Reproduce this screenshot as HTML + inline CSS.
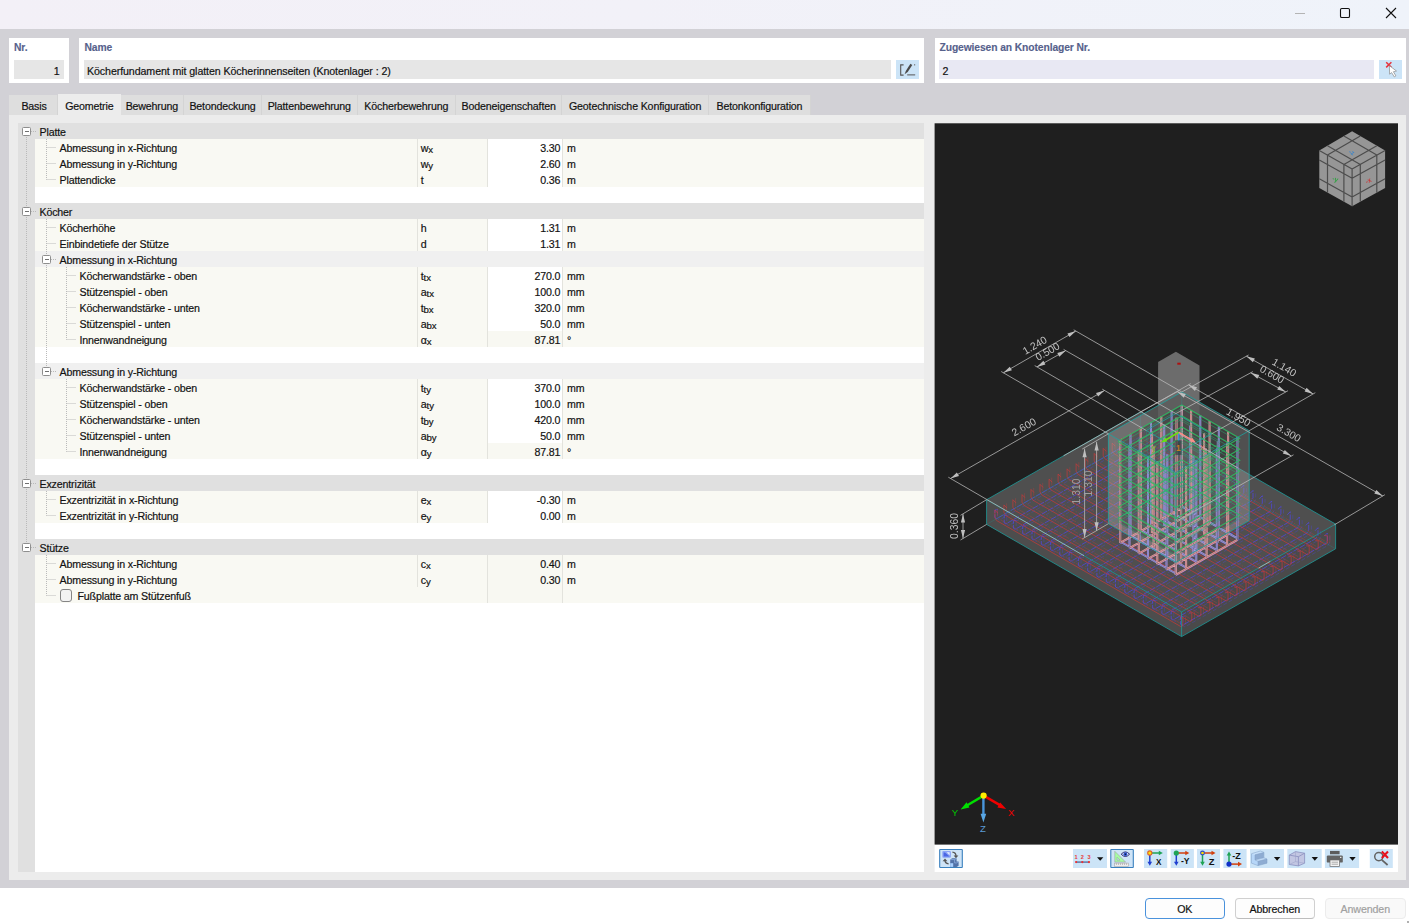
<!DOCTYPE html>
<html lang="de"><head><meta charset="utf-8"><title>Köcherfundament</title>
<style>
*{box-sizing:border-box;margin:0;padding:0}
html,body{width:1409px;height:923px;overflow:hidden;background:#fff}
body{position:relative;font-family:"Liberation Sans",sans-serif;font-size:10.65px;color:#111;-webkit-text-stroke-width:0.18px}
.abs{position:absolute}
#title{left:0;top:0;width:1409px;height:29px;background:linear-gradient(90deg,#f3f0f7 0%,#f2f1f8 45%,#eff3fa 100%)}
#gray{left:0;top:29px;width:1409px;height:859px;background:#d2d1d6}
.box{background:#fff}
.blab{position:absolute;top:3.7px;font-weight:bold;font-size:10.3px;color:#56618c;-webkit-text-stroke-width:0.12px;white-space:nowrap;letter-spacing:-0.1px}
.inp{position:absolute;top:22px;height:19px;background:#e6e6e6;font-size:10.65px;line-height:23.3px;white-space:nowrap;overflow:hidden;color:#111;letter-spacing:-0.09px}
.ibtn{position:absolute;background:#cce4f7}
#tabs{left:9px;top:94.5px;height:20.5px;white-space:nowrap;font-size:0}
.tab{display:inline-block;height:20.5px;line-height:22.5px;font-size:10.65px;background:#dedede;border-right:1px solid #d4d4d4;text-align:center;vertical-align:top;color:#111;letter-spacing:-0.16px}
.tab.act{background:#ececec;border-right:none;position:relative;top:-1px;height:21.5px;line-height:24.5px}
#panel{left:9px;top:115px;width:1397.4px;height:765px;background:#ececec}
#tree{left:18px;top:123px;width:906px;height:749px;background:#fff;overflow:hidden}
#gutter{left:0;top:0;width:16.5px;height:749px;background:#e0e0e0}
.row{position:absolute;left:0;width:906px;height:16px;line-height:18.5px;white-space:nowrap;letter-spacing:-0.16px}
.row.hd{background:#e0e0e0}
.row.sh{left:16.5px;width:889.5px;background:#f0f0f0}
.row.sh .bx{margin-left:-16.5px}
.row.sh .lb{margin-left:-16.5px}
.row.dt{left:16.5px;width:889.5px;background:#f9f9f3}
.row.dt .lb{margin-left:-16.5px}
.row.bl{left:16.5px;width:889.5px;background:#fff}
.lb{position:absolute;top:0}
.bx{position:absolute;top:4px;width:9px;height:9px;border:1px solid #8e8e8e;border-radius:1.5px;background:#fff}
.bx:after{content:"";position:absolute;left:1.5px;top:3px;width:4px;height:1px;background:#707070}
.sy{position:absolute;left:382px;top:0;width:71px;height:16px;border-left:1px solid #e3e3dd;padding-left:3.3px}
.sy sub{font-size:9.6px;vertical-align:baseline;position:relative;top:1.1px;letter-spacing:-0.1px}
.v{position:absolute;left:452.5px;top:0;width:76px;height:16px;text-align:right;padding-right:1.8px;border-left:1px solid #e3e3dd;border-right:1px solid #e3e3dd;background:#f8f8f2}
.v.ed{background:#fff}
.un{position:absolute;left:532.5px;top:0}
.cb{position:absolute;left:25px;top:2.3px;width:12.5px;height:12.5px;border:1px solid #858585;border-radius:3px;background:#f3f3f3}
.tl{position:absolute;left:0;top:0}
.tb{position:absolute;top:4.4px;height:19px;background:#cce4f7}
.tb.sel{border:1px solid #3c84c4;background:#cfe4f6}
#bottom{left:0;top:888px;width:1409px;height:35px;background:#fff}
.btn{position:absolute;top:898px;height:21px;width:80.5px;border:1px solid #d0d0d0;border-bottom-color:#bdbdbd;border-radius:4px;background:#fdfdfd;font-size:10.65px;letter-spacing:-0.1px;text-align:center;line-height:21.5px;color:#111}
.btn.def{border:1.5px solid #4a92dc;line-height:20.5px}
.btn.dis{color:#a0a0a0;background:#f9f9f9;border-color:#ececec}
</style></head><body>
<div id="title" class="abs"></div>
<svg class="abs" style="left:1290px;top:4px" width="112" height="20" viewBox="1290 4 112 20"><path d="M1295 13.5H1305" stroke="#b4b4b4" stroke-width="1"/><rect x="1340.5" y="8.5" width="9" height="9" rx="1.3" fill="none" stroke="#111" stroke-width="1.1"/><path d="M1386 8L1396 18M1396 8L1386 18" stroke="#111" stroke-width="1.1"/></svg>
<div id="gray" class="abs"></div>
<div class="abs box" style="left:9px;top:38px;width:60px;height:45px"><span class="blab" style="left:5px">Nr.</span><div class="inp" style="left:5px;width:50px;text-align:right;padding-right:4.5px">1</div></div>
<div class="abs box" style="left:79px;top:38px;width:845px;height:45px"><span class="blab" style="left:5.5px">Name</span><div class="inp" style="left:5px;width:807px;padding-left:3px">Köcherfundament mit glatten Köcherinnenseiten (Knotenlager : 2)</div><div class="ibtn" style="left:817.2px;top:22.3px;width:23px;height:19px"><svg width="23" height="19" viewBox="896.2 60.3 23 19" style="display:block"><path d="M903.8 65.2H900.9V75.4H903.8" fill="none" stroke="#555" stroke-width="1.1"/><path d="M904.8 74.6l1.2-3.4l4.6-7.2l1.9 1.2l-4.6 7.2z" fill="#4a4a4a"/><path d="M907.4 75.2H915.4" stroke="#555" stroke-width="1"/><rect x="914.2" y="64.6" width="1.2" height="1.1" fill="#666"/></svg></div></div>
<div class="abs box" style="left:935px;top:38px;width:471.4px;height:45px"><span class="blab" style="left:4.5px">Zugewiesen an Knotenlager Nr.</span><div class="inp" style="left:4px;width:435px;padding-left:3.4px;background:#e8e8f3">2</div><div class="ibtn" style="left:443.8px;top:22px;width:23.2px;height:19px"><svg width="23.2" height="19" viewBox="1378.8 60 23.2 19" style="display:block"><path d="M1386 62.2l5.2 5.2M1391.2 62.2l-5.2 5.2" stroke="#e8323c" stroke-width="1.5"/><path d="M1389.2 65.7L1389.4 74.2L1391.4 72.6L1394.1 76.9L1395.7 75.9L1393.2 71.7L1396.3 71Z" fill="#fff" stroke="#8a8a8a" stroke-width="0.7" stroke-linejoin="round"/></svg></div></div>
<div id="tabs" class="abs"><span class="tab" style="width:49px;padding-left:2px">Basis</span><span class="tab act" style="width:62.7px">Geometrie</span><span class="tab" style="width:63.3px">Bewehrung</span><span class="tab" style="width:78px">Betondeckung</span><span class="tab" style="width:95.6px">Plattenbewehrung</span><span class="tab" style="width:98.4px">Köcherbewehrung</span><span class="tab" style="width:106.4px">Bodeneigenschaften</span><span class="tab" style="width:146.6px">Geotechnische Konfiguration</span><span class="tab" style="width:102px">Betonkonfiguration</span></div>
<div id="panel" class="abs"></div>
<div id="tree" class="abs"><div id="gutter" class="abs"></div>
<div class="row hd" style="top:0px"><i class="bx" style="left:4px"></i><span class="lb" style="left:21.5px">Platte</span></div>
<div class="row dt" style="top:16px"><span class="lb" style="left:41.5px">Abmessung in x-Richtung</span><span class="sy">w<sub>x</sub></span><span class="v ed">3.30</span><span class="un">m</span></div>
<div class="row dt" style="top:32px"><span class="lb" style="left:41.5px">Abmessung in y-Richtung</span><span class="sy">w<sub>y</sub></span><span class="v ed">2.60</span><span class="un">m</span></div>
<div class="row dt" style="top:48px"><span class="lb" style="left:41.5px">Plattendicke</span><span class="sy">t</span><span class="v ed">0.36</span><span class="un">m</span></div>
<div class="row bl" style="top:64px"></div>
<div class="row hd" style="top:80px"><i class="bx" style="left:4px"></i><span class="lb" style="left:21.5px">Köcher</span></div>
<div class="row dt" style="top:96px"><span class="lb" style="left:41.5px">Köcherhöhe</span><span class="sy">h</span><span class="v ed">1.31</span><span class="un">m</span></div>
<div class="row dt" style="top:112px"><span class="lb" style="left:41.5px">Einbindetiefe der Stütze</span><span class="sy">d</span><span class="v ed">1.31</span><span class="un">m</span></div>
<div class="row sh" style="top:128px"><i class="bx" style="left:24px"></i><span class="lb" style="left:41.5px">Abmessung in x-Richtung</span></div>
<div class="row dt" style="top:144px"><span class="lb" style="left:61.5px">Köcherwandstärke - oben</span><span class="sy">t<sub>tx</sub></span><span class="v ed">270.0</span><span class="un">mm</span></div>
<div class="row dt" style="top:160px"><span class="lb" style="left:61.5px">Stützenspiel - oben</span><span class="sy">a<sub>tx</sub></span><span class="v ed">100.0</span><span class="un">mm</span></div>
<div class="row dt" style="top:176px"><span class="lb" style="left:61.5px">Köcherwandstärke - unten</span><span class="sy">t<sub>bx</sub></span><span class="v ed">320.0</span><span class="un">mm</span></div>
<div class="row dt" style="top:192px"><span class="lb" style="left:61.5px">Stützenspiel - unten</span><span class="sy">a<sub>bx</sub></span><span class="v ed">50.0</span><span class="un">mm</span></div>
<div class="row dt" style="top:208px"><span class="lb" style="left:61.5px">Innenwandneigung</span><span class="sy">α<sub>x</sub></span><span class="v">87.81</span><span class="un">°</span></div>
<div class="row bl" style="top:224px"></div>
<div class="row sh" style="top:240px"><i class="bx" style="left:24px"></i><span class="lb" style="left:41.5px">Abmessung in y-Richtung</span></div>
<div class="row dt" style="top:256px"><span class="lb" style="left:61.5px">Köcherwandstärke - oben</span><span class="sy">t<sub>ty</sub></span><span class="v ed">370.0</span><span class="un">mm</span></div>
<div class="row dt" style="top:272px"><span class="lb" style="left:61.5px">Stützenspiel - oben</span><span class="sy">a<sub>ty</sub></span><span class="v ed">100.0</span><span class="un">mm</span></div>
<div class="row dt" style="top:288px"><span class="lb" style="left:61.5px">Köcherwandstärke - unten</span><span class="sy">t<sub>by</sub></span><span class="v ed">420.0</span><span class="un">mm</span></div>
<div class="row dt" style="top:304px"><span class="lb" style="left:61.5px">Stützenspiel - unten</span><span class="sy">a<sub>by</sub></span><span class="v ed">50.0</span><span class="un">mm</span></div>
<div class="row dt" style="top:320px"><span class="lb" style="left:61.5px">Innenwandneigung</span><span class="sy">α<sub>y</sub></span><span class="v">87.81</span><span class="un">°</span></div>
<div class="row bl" style="top:336px"></div>
<div class="row hd" style="top:352px"><i class="bx" style="left:4px"></i><span class="lb" style="left:21.5px">Exzentrizität</span></div>
<div class="row dt" style="top:368px"><span class="lb" style="left:41.5px">Exzentrizität in x-Richtung</span><span class="sy">e<sub>x</sub></span><span class="v ed">-0.30</span><span class="un">m</span></div>
<div class="row dt" style="top:384px"><span class="lb" style="left:41.5px">Exzentrizität in y-Richtung</span><span class="sy">e<sub>y</sub></span><span class="v ed">0.00</span><span class="un">m</span></div>
<div class="row bl" style="top:400px"></div>
<div class="row hd" style="top:416px"><i class="bx" style="left:4px"></i><span class="lb" style="left:21.5px">Stütze</span></div>
<div class="row dt" style="top:432px"><span class="lb" style="left:41.5px">Abmessung in x-Richtung</span><span class="sy">c<sub>x</sub></span><span class="v">0.40</span><span class="un">m</span></div>
<div class="row dt" style="top:448px"><span class="lb" style="left:41.5px">Abmessung in y-Richtung</span><span class="sy">c<sub>y</sub></span><span class="v">0.30</span><span class="un">m</span></div>
<div class="row dt ck" style="top:464px"><i class="cb"></i><span class="lb" style="left:59.5px">Fußplatte am Stützenfuß</span><span class="v"></span></div>
<svg class="tl" width="80" height="500" viewBox="0 0 80 500"><path d="M8.5 14V84M8.5 94V356M8.5 366V420M13 8.5H19M13 88.5H19M13 360.5H19M13 424.5H19M28.5 16V56.5M28.5 24.5H38M28.5 40.5H38M28.5 56.5H38M28.5 96V132M28.5 142V244M28.5 104.5H38M28.5 120.5H38M33 136.5H39M48.5 144V216.5M48.5 152.5H58M48.5 168.5H58M48.5 184.5H58M48.5 200.5H58M48.5 216.5H58M33 248.5H39M48.5 256V328.5M48.5 264.5H58M48.5 280.5H58M48.5 296.5H58M48.5 312.5H58M48.5 328.5H58M28.5 368V392.5M28.5 376.5H38M28.5 392.5H38M28.5 432V472.5M28.5 440.5H38M28.5 456.5H38M28.5 472.5H38" fill="none" stroke="#bababa" stroke-width="1" stroke-dasharray="1 1"/></svg>
</div>
<svg id="view" class="abs" width="464" height="749" viewBox="934 123 464 749" style="left:934px;top:123px">
<rect x="934.6" y="844" width="463.4" height="28" fill="#fff"/>
<rect x="934.6" y="123.3" width="463.4" height="721.3" fill="#1f1f1f"/>
<polygon points="1158.1,361.9 1175.9,351.8 1199.5,365.4 1199.5,523.9 1181.7,534 1158.1,520.4" fill="#5c5c5c"/>
<polygon points="1108.4,433.8 1181.8,392 1249.2,430.7 1249.2,520.6 1175.8,562.4 1108.4,523.7" fill="#1f1f1f"/>
<polygon points="1158.1,361.9 1175.9,351.8 1199.5,365.4 1199.5,523.9 1181.7,534 1158.1,520.4" fill="#ffffff" fill-opacity="0.1"/>
<polygon points="986.6,499.7 1181.6,611.9 1335.6,524.1 1140.5,411.9" fill="#aaaaaa" fill-opacity="0.35"/>
<polygon points="986.6,499.7 1181.6,611.9 1181.6,636.6 986.6,524.4" fill="#a4a4a4" fill-opacity="0.35"/>
<polygon points="1181.6,611.9 1335.6,524.1 1335.6,548.8 1181.6,636.6" fill="#9c9c9c" fill-opacity="0.35"/>
<path d="M997.5 511.5L997.5 519.1L999.3 520.1L1142.6 438.4L1144.4 435.4L1144.4 427.8M1006.8 516.9L1006.8 524.4L1008.6 525.5L1151.9 443.8L1153.6 440.7L1153.6 433.2M1016.1 522.2L1016.1 529.8L1017.9 530.8L1161.1 449.1L1162.9 446.1L1162.9 438.5M1025.4 527.5L1025.4 535.1L1027.2 536.1L1170.4 454.5L1172.2 451.4L1172.2 443.8M1034.7 532.9L1034.7 540.4L1036.4 541.5L1179.7 459.8L1181.5 456.7L1181.5 449.2M1043.9 538.2L1043.9 545.8L1045.7 546.8L1189 465.1L1190.7 462.1L1190.7 454.5M1053.2 543.6L1053.2 551.1L1055 552.1L1198.3 470.5L1200 467.4L1200 459.9M1062.5 548.9L1062.5 556.4L1064.3 557.5L1207.5 475.8L1209.3 472.7L1209.3 465.2M1071.8 554.2L1071.8 561.8L1073.5 562.8L1216.8 481.1L1218.6 478.1L1218.6 470.5M1081 559.6L1081 567.1L1082.8 568.2L1226.1 486.5L1227.9 483.4L1227.9 475.9M1090.3 564.9L1090.3 572.5L1092.1 573.5L1235.4 491.8L1237.1 488.8L1237.1 481.2M1099.6 570.2L1099.6 577.8L1101.4 578.8L1244.6 497.2L1246.4 494.1L1246.4 486.5M1108.9 575.6L1108.9 583.1L1110.7 584.2L1253.9 502.5L1255.7 499.4L1255.7 491.9M1118.2 580.9L1118.2 588.5L1119.9 589.5L1263.2 507.8L1265 504.8L1265 497.2M1127.4 586.3L1127.4 593.8L1129.2 594.9L1272.5 513.2L1274.3 510.1L1274.3 502.6M1136.7 591.6L1136.7 599.1L1138.5 600.2L1281.8 518.5L1283.5 515.4L1283.5 507.9M1146 596.9L1146 604.5L1147.8 605.5L1291 523.9L1292.8 520.8L1292.8 513.2M1155.3 602.3L1155.3 609.8L1157.1 610.9L1300.3 529.2L1302.1 526.1L1302.1 518.6M1164.6 607.6L1164.6 615.2L1166.3 616.2L1309.6 534.5L1311.4 531.5L1311.4 523.9M1173.8 613L1173.8 620.5L1175.6 621.5L1318.9 539.9L1320.7 536.8L1320.7 529.3M1183.1 618.3L1183.1 625.8L1184.9 626.9L1328.2 545.2L1329.9 542.1L1329.9 534.6" fill="none" stroke="#4c44e0" stroke-width="0.65" stroke-opacity="0.55" stroke-dasharray="4 2"/>
<path d="M997.5 508.5L997.5 516L999.3 519.1L1183.7 625.2L1185.5 624.2L1185.5 616.6M1006.6 503.4L1006.6 510.9L1008.3 514L1192.7 620.1L1194.5 619L1194.5 611.5M1015.6 498.2L1015.6 505.7L1017.4 508.8L1201.8 614.9L1203.5 613.9L1203.5 606.3M1024.6 493.1L1024.6 500.6L1026.4 503.7L1210.8 609.8L1212.6 608.7L1212.6 601.2M1033.7 487.9L1033.7 495.5L1035.4 498.5L1219.8 604.6L1221.6 603.6L1221.6 596M1042.7 482.8L1042.7 490.3L1044.5 493.4L1228.9 599.5L1230.6 598.4L1230.6 590.9M1051.7 477.6L1051.7 485.2L1053.5 488.2L1237.9 594.3L1239.7 593.3L1239.7 585.7M1060.7 472.5L1060.7 480L1062.5 483.1L1246.9 589.2L1248.7 588.1L1248.7 580.6M1069.8 467.3L1069.8 474.9L1071.5 477.9L1255.9 584L1257.7 583L1257.7 575.4M1078.8 462.2L1078.8 469.7L1080.6 472.8L1265 578.9L1266.7 577.8L1266.7 570.3M1087.8 457L1087.8 464.6L1089.6 467.7L1274 573.7L1275.8 572.7L1275.8 565.1M1096.9 451.9L1096.9 459.4L1098.6 462.5L1283 568.6L1284.8 567.5L1284.8 560M1105.9 446.7L1105.9 454.3L1107.7 457.4L1292 563.4L1293.8 562.4L1293.8 554.9M1114.9 441.6L1114.9 449.1L1116.7 452.2L1301.1 558.3L1302.8 557.3L1302.8 549.7M1123.9 436.4L1123.9 444L1125.7 447.1L1310.1 553.1L1311.9 552.1L1311.9 544.6M1133 431.3L1133 438.8L1134.7 441.9L1319.1 548L1320.9 547L1320.9 539.4M1142 426.1L1142 433.7L1143.8 436.8L1328.2 542.9L1329.9 541.8L1329.9 534.3" fill="none" stroke="#d83838" stroke-width="0.6" stroke-opacity="0.5" stroke-dasharray="8 1.5 1.5 1.5"/>
<path d="M997.8 509.7L994.9 510L994.9 517.5L996.7 518.6L1139.9 436.9L1141.7 433.8L1141.7 426.3L1138.7 429.4M1007.1 515L1004.2 515.3L1004.2 522.9L1005.9 523.9L1149.2 442.3L1151 439.2L1151 431.6L1148 434.7M1016.4 520.4L1013.4 520.7L1013.4 528.2L1015.2 529.3L1158.5 447.6L1160.3 444.5L1160.3 437L1157.3 440M1025.7 525.7L1022.7 526L1022.7 533.6L1024.5 534.6L1167.8 452.9L1169.5 449.9L1169.5 442.3L1166.6 445.4M1035 531L1032 531.4L1032 538.9L1033.8 539.9L1177 458.3L1178.8 455.2L1178.8 447.7L1175.9 450.7M1044.2 536.4L1041.3 536.7L1041.3 544.2L1043 545.3L1186.3 463.6L1188.1 460.5L1188.1 453L1185.1 456M1053.5 541.7L1050.6 542L1050.6 549.6L1052.3 550.6L1195.6 468.9L1197.4 465.9L1197.4 458.3L1194.4 461.4M1062.8 547L1059.8 547.4L1059.8 554.9L1061.6 556L1204.9 474.3L1206.6 471.2L1206.6 463.7L1203.7 466.7M1072.1 552.4L1069.1 552.7L1069.1 560.2L1070.9 561.3L1214.1 479.6L1215.9 476.5L1215.9 469L1213 472.1M1081.3 557.7L1078.4 558L1078.4 565.6L1080.2 566.6L1223.4 485L1225.2 481.9L1225.2 474.3L1222.2 477.4M1090.6 563.1L1087.7 563.4L1087.7 570.9L1089.4 572L1232.7 490.3L1234.5 487.2L1234.5 479.7L1231.5 482.7M1099.9 568.4L1096.9 568.7L1096.9 576.3L1098.7 577.3L1242 495.6L1243.8 492.6L1243.8 485L1240.8 488.1M1109.2 573.7L1106.2 574.1L1106.2 581.6L1108 582.6L1251.3 501L1253 497.9L1253 490.4L1250.1 493.4M1118.5 579.1L1115.5 579.4L1115.5 586.9L1117.3 588L1260.5 506.3L1262.3 503.2L1262.3 495.7L1259.4 498.8M1127.7 584.4L1124.8 584.7L1124.8 592.3L1126.6 593.3L1269.8 511.6L1271.6 508.6L1271.6 501L1268.6 504.1M1137 589.8L1134.1 590.1L1134.1 597.6L1135.8 598.7L1279.1 517L1280.9 513.9L1280.9 506.4L1277.9 509.4M1146.3 595.1L1143.3 595.4L1143.3 603L1145.1 604L1288.4 522.3L1290.2 519.3L1290.2 511.7L1287.2 514.8M1155.6 600.4L1152.6 600.7L1152.6 608.3L1154.4 609.3L1297.7 527.7L1299.4 524.6L1299.4 517L1296.5 520.1M1164.9 605.8L1161.9 606.1L1161.9 613.6L1163.7 614.7L1306.9 533L1308.7 529.9L1308.7 522.4L1305.8 525.4M1174.1 611.1L1171.2 611.4L1171.2 619L1173 620L1316.2 538.3L1318 535.3L1318 527.7L1315 530.8M1183.4 616.4L1180.5 616.8L1180.5 624.3L1182.2 625.4L1325.5 543.7L1327.3 540.6L1327.3 533.1L1324.3 536.1" fill="none" stroke="#5046ee" stroke-width="0.85" stroke-opacity="0.8" stroke-dasharray="6 1.2"/>
<path d="M997.8 513.1L994.9 510L994.9 517.6L996.7 520.6L1181 626.7L1182.8 625.7L1182.8 618.1L1179.9 617.8M1006.9 507.9L1003.9 504.9L1003.9 512.4L1005.7 515.5L1190.1 621.6L1191.8 620.5L1191.8 613L1188.9 612.7M1015.9 502.8L1012.9 499.7L1012.9 507.3L1014.7 510.3L1199.1 616.4L1200.9 615.4L1200.9 607.8L1197.9 607.5M1024.9 497.6L1022 494.6L1022 502.1L1023.7 505.2L1208.1 611.3L1209.9 610.2L1209.9 602.7L1206.9 602.4M1033.9 492.5L1031 489.4L1031 497L1032.8 500.1L1217.2 606.1L1218.9 605.1L1218.9 597.5L1216 597.2M1043 487.4L1040 484.3L1040 491.8L1041.8 494.9L1226.2 601L1228 599.9L1228 592.4L1225 592.1M1052 482.2L1049.1 479.1L1049.1 486.7L1050.8 489.8L1235.2 595.8L1237 594.8L1237 587.3L1234 586.9M1061 477.1L1058.1 474L1058.1 481.5L1059.9 484.6L1244.2 590.7L1246 589.7L1246 582.1L1243.1 581.8M1070.1 471.9L1067.1 468.8L1067.1 476.4L1068.9 479.5L1253.3 585.5L1255 584.5L1255 577L1252.1 576.6M1079.1 466.8L1076.1 463.7L1076.1 471.2L1077.9 474.3L1262.3 580.4L1264.1 579.4L1264.1 571.8L1261.1 571.5M1088.1 461.6L1085.2 458.5L1085.2 466.1L1086.9 469.2L1271.3 575.3L1273.1 574.2L1273.1 566.7L1270.1 566.3M1097.1 456.5L1094.2 453.4L1094.2 460.9L1096 464L1280.4 570.1L1282.1 569.1L1282.1 561.5L1279.2 561.2M1106.2 451.3L1103.2 448.3L1103.2 455.8L1105 458.9L1289.4 565L1291.2 563.9L1291.2 556.4L1288.2 556M1115.2 446.2L1112.2 443.1L1112.2 450.7L1114 453.7L1298.4 559.8L1300.2 558.8L1300.2 551.2L1297.2 550.9M1124.2 441L1121.3 438L1121.3 445.5L1123 448.6L1307.4 554.7L1309.2 553.6L1309.2 546.1L1306.3 545.8M1133.3 435.9L1130.3 432.8L1130.3 440.4L1132.1 443.4L1316.5 549.5L1318.2 548.5L1318.2 540.9L1315.3 540.6M1142.3 430.7L1139.3 427.7L1139.3 435.2L1141.1 438.3L1325.5 544.4L1327.3 543.3L1327.3 535.8L1324.3 535.5" fill="none" stroke="#e63434" stroke-width="0.75" stroke-opacity="0.75"/>
<path d="M986.6 499.7L1181.6 611.9M1181.6 611.9L1335.6 524.1M1335.6 524.1L1140.5 411.9M1140.5 411.9L986.6 499.7M986.6 499.7L986.6 524.4M1181.6 611.9L1181.6 636.6M1335.6 524.1L1335.6 548.8M986.6 524.4L1181.6 636.6M1181.6 636.6L1335.6 548.8" fill="none" stroke="#1e9a98" stroke-width="0.9" stroke-opacity="0.9"/>
<path d="M1140.5 411.9L1140.5 436.6M1140.5 436.6L986.6 524.4M1140.5 436.6L1335.6 548.8" fill="none" stroke="#1e9a98" stroke-width="0.7" stroke-opacity="0.35"/>
<polygon points="1108.4,523.7 1175.8,562.4 1175.8,472.6 1108.4,433.8" fill="#b8b8b8" fill-opacity="0.36"/>
<polygon points="1175.8,562.4 1249.2,520.6 1249.2,430.7 1175.8,472.6" fill="#a8a8a8" fill-opacity="0.36"/>
<polygon points="1108.4,433.8 1175.8,472.6 1249.2,430.7 1181.8,392" fill="#acacac" fill-opacity="0.35"/>
<polygon points="1120.2,440 1181.8,404.9 1237.4,436.9 1237.4,520.6 1175.8,555.7 1120.2,523.7" fill="#1c1c1c" fill-opacity="0.3"/>
<path d="M1181.8 507.8L1181.8 404.9M1175.8 574.9L1175.8 472M1129.5 548.2L1129.5 445.3M1130.5 537.1L1130.5 434.2M1200.3 518.5L1200.3 415.6M1196.3 563.2L1196.3 460.3M1148 558.9L1148 456M1151 525.4L1151 422.5M1218.8 529.1L1218.8 426.2M1216.8 551.5L1216.8 448.6M1166.5 569.5L1166.5 466.6M1171.6 513.7L1171.6 410.8M1237.4 539.8L1237.4 436.9M1237.4 539.8L1237.4 436.9M1139.8 539.9L1139.8 438.4M1139.8 539.9L1139.8 438.4M1190.3 526.9L1190.3 425.4M1193.4 556.7L1193.4 455.2M1167.3 555.8L1167.3 454.2M1164.2 525.9L1164.2 424.4M1217.8 542.8L1217.8 441.2M1217.8 542.8L1217.8 441.2M1120.2 541.5L1175.8 573.5M1130.5 535.7L1186.1 567.6M1140.8 529.8L1196.3 561.8M1151 524L1206.6 555.9M1161.3 518.1L1216.8 550.1M1171.6 512.3L1227.1 544.2M1181.8 506.4L1237.4 538.4" fill="none" stroke="#aaa2ff" stroke-width="2.0" stroke-opacity="0.85"/>
<path d="M1120.2 542.9L1120.2 440M1120.2 542.9L1120.2 440M1191.1 513.1L1191.1 410.2M1186.1 569L1186.1 466.1M1138.8 553.6L1138.8 450.7M1140.8 531.2L1140.8 428.3M1209.6 523.8L1209.6 420.9M1206.6 557.3L1206.6 454.4M1157.3 564.2L1157.3 461.3M1161.3 519.5L1161.3 416.6M1228.1 534.4L1228.1 431.5M1227.1 545.6L1227.1 442.7M1175.8 574.9L1175.8 472M1181.8 507.8L1181.8 404.9M1176.5 519L1176.5 417.4M1181.1 563.7L1181.1 462.2M1153.6 547.8L1153.6 446.3M1152 532.9L1152 431.4M1204.1 534.8L1204.1 433.3M1205.6 549.7L1205.6 448.2M1181.1 563.7L1181.1 462.2M1176.5 519L1176.5 417.4M1120.2 542.9L1181.8 507.8M1129.5 548.2L1191.1 513.1M1138.8 553.6L1200.3 518.5M1148 558.9L1209.6 523.8M1157.3 564.2L1218.8 529.1M1166.5 569.5L1228.1 534.4M1175.8 574.9L1237.4 539.8" fill="none" stroke="#ffa8aa" stroke-width="2.1" stroke-opacity="0.85"/>
<path d="M1181.8 507.8L1181.8 404.9M1175.8 574.9L1175.8 472M1129.5 548.2L1129.5 445.3M1130.5 537.1L1130.5 434.2M1200.3 518.5L1200.3 415.6M1196.3 563.2L1196.3 460.3M1148 558.9L1148 456M1151 525.4L1151 422.5M1218.8 529.1L1218.8 426.2M1216.8 551.5L1216.8 448.6M1166.5 569.5L1166.5 466.6M1171.6 513.7L1171.6 410.8M1237.4 539.8L1237.4 436.9M1237.4 539.8L1237.4 436.9M1139.8 539.9L1139.8 438.4M1139.8 539.9L1139.8 438.4M1190.3 526.9L1190.3 425.4M1193.4 556.7L1193.4 455.2M1167.3 555.8L1167.3 454.2M1164.2 525.9L1164.2 424.4M1217.8 542.8L1217.8 441.2M1217.8 542.8L1217.8 441.2M1120.2 541.5L1175.8 573.5M1130.5 535.7L1186.1 567.6M1140.8 529.8L1196.3 561.8M1151 524L1206.6 555.9M1161.3 518.1L1216.8 550.1M1171.6 512.3L1227.1 544.2M1181.8 506.4L1237.4 538.4M1120.2 542.9L1120.2 440M1120.2 542.9L1120.2 440M1191.1 513.1L1191.1 410.2M1186.1 569L1186.1 466.1M1138.8 553.6L1138.8 450.7M1140.8 531.2L1140.8 428.3M1209.6 523.8L1209.6 420.9M1206.6 557.3L1206.6 454.4M1157.3 564.2L1157.3 461.3M1161.3 519.5L1161.3 416.6M1228.1 534.4L1228.1 431.5M1227.1 545.6L1227.1 442.7M1175.8 574.9L1175.8 472M1181.8 507.8L1181.8 404.9M1176.5 519L1176.5 417.4M1181.1 563.7L1181.1 462.2M1153.6 547.8L1153.6 446.3M1152 532.9L1152 431.4M1204.1 534.8L1204.1 433.3M1205.6 549.7L1205.6 448.2M1181.1 563.7L1181.1 462.2M1176.5 519L1176.5 417.4M1120.2 542.9L1181.8 507.8M1129.5 548.2L1191.1 513.1M1138.8 553.6L1200.3 518.5M1148 558.9L1209.6 523.8M1157.3 564.2L1218.8 529.1M1166.5 569.5L1228.1 534.4M1175.8 574.9L1237.4 539.8" fill="none" stroke="#4c4c54" stroke-width="0.7" stroke-opacity="0.5"/>
<path d="M1137.4 440.4L1181.1 465.6L1220.2 443.3L1176.5 418.1L1137.4 440.4M1117.9 444.8L1175.8 478.1L1239.7 441.7L1181.8 408.4L1117.9 444.8M1137.4 451.4L1181.1 476.6L1220.2 454.3L1176.5 429.1L1137.4 451.4M1117.9 455.8L1175.8 489.1L1239.7 452.6L1181.8 419.3L1117.9 455.8M1137.4 462.4L1181.1 487.5L1220.2 465.3L1176.5 440.1L1137.4 462.4M1117.9 466.8L1175.8 500.1L1239.7 463.6L1181.8 430.3L1117.9 466.8M1137.4 473.3L1181.1 498.5L1220.2 476.2L1176.5 451.1L1137.4 473.3M1117.9 477.7L1175.8 511L1239.7 474.6L1181.8 441.3L1117.9 477.7M1137.4 484.3L1181.1 509.5L1220.2 487.2L1176.5 462L1137.4 484.3M1117.9 488.7L1175.8 522L1239.7 485.6L1181.8 452.3L1117.9 488.7M1137.4 495.3L1181.1 520.5L1220.2 498.2L1176.5 473L1137.4 495.3M1117.9 499.7L1175.8 533L1239.7 496.5L1181.8 463.2L1117.9 499.7M1137.4 506.3L1181.1 531.4L1220.2 509.2L1176.5 484L1137.4 506.3M1117.9 510.7L1175.8 544L1239.7 507.5L1181.8 474.2L1117.9 510.7M1137.4 517.3L1181.1 542.4L1220.2 520.1L1176.5 495L1137.4 517.3M1117.9 521.6L1175.8 555L1239.7 518.5L1181.8 485.2L1117.9 521.6" fill="none" stroke="#27b070" stroke-width="0.9" stroke-opacity="0.5"/>
<path d="M1117.9 441.4L1175.8 474.7L1239.7 438.2L1181.8 404.9L1117.9 441.4M1117.9 452.3L1175.8 485.7L1239.7 449.2L1181.8 415.9L1117.9 452.3M1117.9 463.3L1175.8 496.6L1239.7 460.2L1181.8 426.9L1117.9 463.3M1117.9 474.3L1175.8 507.6L1239.7 471.2L1181.8 437.8L1117.9 474.3M1117.9 485.3L1175.8 518.6L1239.7 482.1L1181.8 448.8L1117.9 485.3M1117.9 496.3L1175.8 529.6L1239.7 493.1L1181.8 459.8L1117.9 496.3M1117.9 507.2L1175.8 540.5L1239.7 504.1L1181.8 470.8L1117.9 507.2M1117.9 518.2L1175.8 551.5L1239.7 515.1L1181.8 481.8L1117.9 518.2" fill="none" stroke="#2ebc62" stroke-width="1.15" stroke-opacity="0.85"/>
<path d="M1108.4 433.8L1175.8 472.6M1175.8 472.6L1249.2 430.7M1249.2 430.7L1181.8 392M1181.8 392L1108.4 433.8M1108.4 433.8L1108.4 523.7M1175.8 472.6L1175.8 562.4M1249.2 430.7L1249.2 520.6M1108.4 523.7L1175.8 562.4M1175.8 562.4L1249.2 520.6M1146.3 430.5L1181.7 450.9M1181.7 450.9L1211.3 434M1211.3 434L1175.9 413.6M1175.9 413.6L1146.3 430.5" fill="none" stroke="#1fa3a0" stroke-width="0.9" stroke-opacity="0.9"/>
<path d="M1181.8 392L1181.8 481.8M1181.8 481.8L1108.4 523.7M1181.8 481.8L1249.2 520.6M1152.2 520.4L1181.7 537.4M1181.7 537.4L1205.4 523.9M1146.3 430.5L1152.2 520.4M1181.7 450.9L1181.7 537.4M1211.3 434L1205.4 523.9" fill="none" stroke="#1fa3a0" stroke-width="0.7" stroke-opacity="0.4"/>
<rect x="1177.3" y="362.7" width="3.4" height="2" fill="#b01010"/>
<path d="M950.5 478.5L1104.5 390.5M948.3 477.2L1084.1 555.8M1102.3 389.2L1238 468M1003.4 372.8L1075.9 331M1001.2 371.5L1108.4 433.8M1073.7 329.8L1181.8 392M1036.9 366.9L1065.8 350.6M1034.7 365.6L1146.3 430.5M1063.6 349.4L1175.9 413.6M1246.4 356.2L1313.1 393.9M1248.6 355L1181.8 392M1315.3 392.7L1249.2 430.7M1250.7 372.8L1285.8 391.9M1252.9 371.6L1175.9 413.6M1288 390.7L1211.3 434M1188.5 384.8L1382.8 496M1190.7 383.6L1063.6 455.8M1384.9 494.7L1334.4 524.8M1270.4 561.3L1258.6 568M1177.3 391.7L1291.3 456M1293.5 454.8L1178.8 520.1M1179.5 390.5L1140.5 411.9M963 514L963 538.6M960.5 515.3L986.6 499.7M960.5 540L986.6 524.4M1084.6 448.6L1084.6 537.6M1096.6 441.8L1096.6 530.8M1082.2 449.1L1108.4 433.8M1082.2 539L1108.4 523.7" fill="none" stroke="#bcbcbc" stroke-width="0.85" stroke-opacity="0.9"/>
<path d="M950.5 478.5L956.9 472.4L959 476.1ZM1104.5 390.5L1098.1 396.6L1096 392.9ZM1003.4 372.8L1009.8 366.7L1011.9 370.3ZM1075.9 331L1069.5 337.1L1067.4 333.5ZM1036.9 366.9L1043.4 360.8L1045.4 364.5ZM1065.8 350.6L1059.3 356.7L1057.3 353ZM1246.4 356.2L1254.9 358.6L1252.9 362.3ZM1313.1 393.9L1304.6 391.5L1306.6 387.8ZM1250.7 372.8L1259.3 375.1L1257.3 378.8ZM1285.8 391.9L1277.2 389.6L1279.2 385.9ZM1188.5 384.8L1197 387.2L1194.9 390.9ZM1382.8 496L1374.3 493.6L1376.4 489.9ZM1177.3 391.7L1185.8 394.1L1183.8 397.8ZM1291.3 456L1282.8 453.6L1284.8 449.9ZM963 514L965.1 522.6L960.9 522.6ZM963 538.6L960.9 530L965.1 530ZM1084.6 448.6L1086.7 457.2L1082.5 457.2ZM1084.6 537.6L1082.5 529L1086.7 529ZM1096.6 441.8L1098.7 450.4L1094.5 450.4ZM1096.6 530.8L1094.5 522.2L1098.7 522.2Z" fill="#bebebe"/>
<g font-family="Liberation Sans, sans-serif" font-size="10.4" fill="#c8c8c8" opacity="0.96" style="-webkit-text-stroke-width:0"><text x="1023.9" y="427" transform="rotate(-29.7 1023.9 427)" text-anchor="middle" dominant-baseline="central">2.600</text><text x="1034.7" y="345.4" transform="rotate(-29.7 1034.7 345.4)" text-anchor="middle" dominant-baseline="central">1.240</text><text x="1047.6" y="351.6" transform="rotate(-29.7 1047.6 351.6)" text-anchor="middle" dominant-baseline="central">0.500</text><text x="1284.2" y="367.5" transform="rotate(29.9 1284.2 367.5)" text-anchor="middle" dominant-baseline="central">1.140</text><text x="1272.1" y="374.4" transform="rotate(29.9 1272.1 374.4)" text-anchor="middle" dominant-baseline="central">0.600</text><text x="1238.4" y="417.3" transform="rotate(29.9 1238.4 417.3)" text-anchor="middle" dominant-baseline="central">1.950</text><text x="1288.7" y="432.9" transform="rotate(29.9 1288.7 432.9)" text-anchor="middle" dominant-baseline="central">3.300</text><text x="954.6" y="526" transform="rotate(-90 954.6 526)" text-anchor="middle" dominant-baseline="central">0.360</text><g fill="#a4a4a4"><text x="1076" y="491.5" transform="rotate(-90 1076 491.5)" text-anchor="middle" dominant-baseline="central">1.310</text><text x="1088.6" y="483.5" transform="rotate(-90 1088.6 483.5)" text-anchor="middle" dominant-baseline="central">1.310</text></g></g>
<path d="M1178.8 432.3V441.3" stroke="#3a9be8" stroke-width="1.4"/>
<rect x="1175.2" y="440.3" width="6.4" height="14.6" fill="#2c3038" fill-opacity="0.6"/>
<text x="1178.6" y="451.3" font-family="Liberation Sans, sans-serif" font-size="8.4" font-weight="bold" fill="#d8861c" fill-opacity="0.85" text-anchor="middle">1</text>
<path d="M1178.8 432.3L1163.5 441.2" stroke="#6be010" stroke-width="1.6"/><path d="M1161 442.6L1165.6 437.6L1167.2 441.4Z" fill="#6be010"/>
<path d="M1178.8 432.3L1193 440.7" stroke="#ff8e86" stroke-width="1.5"/><path d="M1195.8 442.4L1190.2 441.3L1192.2 437.8Z" fill="#ff8e86"/>
<g font-family="Liberation Sans, sans-serif" font-size="8.5"><text x="1151.8" y="451.3" fill="#63c020" fill-opacity="0.85">y</text><text x="1200.2" y="449.6" fill="#f07a70" fill-opacity="0.85">x</text></g>
<polygon points="1352.1,131.2 1385.1,150.5 1385.1,188.1 1352.1,206.3 1319.3,188.1 1319.3,150.5" fill="#969696"/>
<path d="M1319.3 150.5L1352.1 169M1352.1 169L1385.1 150.5M1352.1 169L1352.1 206.3M1327.5 145.7L1360.3 164.4M1327.5 155.1L1360.3 136M1327.5 155.1L1327.5 192.7M1319.3 159.9L1352.1 178.3M1360.3 164.4L1360.3 201.8M1352.1 178.3L1385.1 159.9M1343.9 136L1376.8 155.1M1343.9 164.4L1376.8 145.7M1343.9 164.4L1343.9 201.8M1319.3 178.7L1352.1 197M1376.8 155.1L1376.8 192.7M1352.1 197L1385.1 178.7" fill="none" stroke="#4c4c4c" stroke-width="1.2"/>
<g font-family="Liberation Sans, sans-serif" font-size="6.5" font-weight="bold"><text x="1349.2" y="154.5" fill="#3f86c8" transform="rotate(28 1352 152)">-z</text><text x="1332.3" y="181.5" fill="#27a43a" transform="rotate(18 1336 180)">-y</text><text x="1365" y="183" fill="#c83a3a" transform="rotate(-28 1368 180)">-x</text></g>
<path d="M983.6 795.6L966.5 805.8" stroke="#00e000" stroke-width="2.4"/><path d="M960.6 809.4L966.6 802.3L969.4 807.4Z" fill="#00e000"/>
<path d="M983.6 795.6L1000.4 805.4" stroke="#f00000" stroke-width="2.4"/><path d="M1006.2 808.9L997.4 807.6L1000.2 802.4Z" fill="#f00000"/>
<path d="M983.4 795.6V815.5" stroke="#4a96dc" stroke-width="2.4"/><path d="M983.4 822.4L980.6 813.8L986.2 813.8Z" fill="#5aa8e6"/>
<circle cx="983.6" cy="795.6" r="3.1" fill="#ffee00"/>
<g font-family="Liberation Sans, sans-serif" font-size="9.6"><text x="951.8" y="816" fill="#00c400">Y</text><text x="1007.9" y="815.5" fill="#f00000">X</text><text x="980" y="832" fill="#5b9bd5">Z</text></g>
<g><rect x="939.7" y="849.5" width="22.6" height="18" rx="0.4" fill="#cfe4f7" stroke="#3a80be" stroke-width="1.1"/><rect x="1073" y="849" width="34.0" height="19" fill="#cce4f7"/><rect x="1110.8" y="849.5" width="22.5" height="18" rx="0.4" fill="#cfe4f7" stroke="#3a80be" stroke-width="1.1"/><rect x="1144" y="849" width="23.2" height="19" fill="#cce4f7"/><rect x="1170.7" y="849" width="23.2" height="19" fill="#cce4f7"/><rect x="1197" y="849" width="23.0" height="19" fill="#cce4f7"/><rect x="1223.4" y="849" width="23.2" height="19" fill="#cce4f7"/><rect x="1250" y="849" width="34.0" height="19" fill="#cce4f7"/><rect x="1287.3" y="849" width="34.4" height="19" fill="#cce4f7"/><rect x="1324.9" y="849" width="34.2" height="19" fill="#cce4f7"/><rect x="1369.8" y="849" width="23.0" height="19" fill="#cce4f7"/><rect x="942.3" y="851" width="8.6" height="6.8" rx="1" fill="#8ba4f6"/><path d="M943.6 856.6V852.6H945L949.6 856.6Z" fill="#4a66e4"/><path d="M946.6 852.3H949.6V855.2Z" fill="#e8eeff"/><path d="M952.4 852.2q3.6 0.3 3.6 4" fill="none" stroke="#555" stroke-width="1.3"/><path d="M953.6 855.6h4.8l-2.4 2.6z" fill="#555"/><path d="M948.6 863.8q-3.6-0.3-3.6-3.2" fill="none" stroke="#555" stroke-width="1.3"/><path d="M942.6 861.2h4.8l-2.4-2.7z" fill="#555"/><path d="M950.2 859.6l2-1.3h4.4v3.3h2v4.2l-2 1.1h-6.4z" fill="#5272a8"/><path d="M950.2 859.6h4.4v3.3h2l2-1.3M954.6 859.6l2-1.3" fill="none" stroke="#9ec0ee" stroke-width="0.6"/><path d="M950.2 863.2h3v3.7h-3z" fill="#a8d0ff"/><g font-family="Liberation Sans, sans-serif" font-size="5.6" font-weight="bold" fill="#e83a3a" text-anchor="middle"><text x="1076" y="858.8">1</text><text x="1082.3" y="858.8">2</text><text x="1089.1" y="858.8">3</text></g><path d="M1076 862.1H1089" stroke="#5a78a8" stroke-width="1.5"/><circle cx="1076.1" cy="862.1" r="1.15" fill="#f03030"/><circle cx="1082.3" cy="862.1" r="1.15" fill="#f03030"/><circle cx="1089" cy="862.1" r="1.15" fill="#f03030"/><path d="M1097 857.2h6.4l-3.2 3.6z" fill="#111"/><path d="M1114.8 851.3V862.1H1125.6Z" fill="#a6fca2" stroke="#9aa0a6" stroke-width="0.6"/><path d="M1117 857.2V860.2H1120Z" fill="#c6dcee" stroke="#8aa890" stroke-width="0.5"/><rect x="1114.6" y="863.1" width="14" height="3.4" fill="#ececec" stroke="#a8a8a8" stroke-width="0.6"/><path d="M1116.5 863.3v1.6M1118.5 863.3v1.6M1120.5 863.3v1.6M1122.5 863.3v1.6M1124.5 863.3v1.6M1126.5 863.3v1.6" stroke="#999" stroke-width="0.6"/><path d="M1121.2 854.2q4.2-4.6 8.4 0q-4.2 4.6-8.4 0z" fill="#dfe8ff" stroke="#2b2b72" stroke-width="1"/><circle cx="1125.4" cy="854.2" r="1.9" fill="#2f56d0"/><circle cx="1125.4" cy="854.2" r="0.8" fill="#151540"/><path d="M1151.5 853H1159.8" stroke="#1fa355" stroke-width="1.5"/><path d="M1162.8 853l-4 -2.3v4.6z" fill="#1fa355"/><path d="M1149.8 855V862.8" stroke="#1f3fd0" stroke-width="1.5"/><path d="M1149.8 865.8l-2.3 -4h4.6z" fill="#1f3fd0"/><circle cx="1149.8" cy="853" r="2.1" fill="#ffe000" stroke="#e0602a" stroke-width="1.1"/><path d="M1178 853H1186.3" stroke="#d2400f" stroke-width="1.5"/><path d="M1189.3 853l-4 -2.3v4.6z" fill="#d2400f"/><path d="M1176.3 855V862.8" stroke="#1f3fd0" stroke-width="1.5"/><path d="M1176.3 865.8l-2.3 -4h4.6z" fill="#1f3fd0"/><circle cx="1176.3" cy="853" r="2.6" fill="#1fa355"/><path d="M1204.2 853H1212.5" stroke="#d2400f" stroke-width="1.5"/><path d="M1215.5 853l-4 -2.3v4.6z" fill="#d2400f"/><path d="M1202.5 855V862.8" stroke="#1fa355" stroke-width="1.5"/><path d="M1202.5 865.8l-2.3 -4h4.6z" fill="#1fa355"/><circle cx="1202.5" cy="853" r="1.9" fill="#ffe000" stroke="#2a48c8" stroke-width="1.1"/><path d="M1231 864.1H1239" stroke="#d2400f" stroke-width="1.5"/><path d="M1242 864.1l-4 -2.3v4.6z" fill="#d2400f"/><path d="M1229 862V854.6" stroke="#1fa355" stroke-width="1.5"/><path d="M1229 851.6l-2.3 4h4.6z" fill="#1fa355"/><circle cx="1229" cy="864.1" r="2.6" fill="#1030c8"/><g font-family="Liberation Sans, sans-serif" font-weight="bold" font-size="9.4" fill="#111" text-anchor="middle"><text x="1158.8" y="864.8" font-size="9.8" textLength="5.4" lengthAdjust="spacingAndGlyphs">X</text><text x="1185.2" y="864.4" font-size="8.6">-Y</text><text x="1211.5" y="864.6">Z</text><text x="1236.6" y="859.4" font-size="9">-Z</text></g><path d="M1251.5 853.7L1255 854.8V859.9L1258 861.3V865.6L1251.5 863.2Z" fill="#b6d6f8"/><path d="M1251.5 853.7L1260.4 851L1263.9 852.3L1255 854.8Z" fill="#c6e0fa"/><path d="M1255 854.8L1263.8 852.5V857.8L1255 859.9Z" fill="#8eacd2"/><path d="M1255 859.9L1263.8 857.8L1267 859L1258 861.3Z" fill="#c2dcf8"/><path d="M1258 861.3L1267 859V863.2L1258 865.6Z" fill="#8eacd2"/><path d="M1251.5 853.7L1260.4 851L1263.9 852.3V857.8L1267 859V863.2L1258 865.6L1251.5 863.2ZM1255 854.8L1263.8 852.5M1255 854.8V859.9L1258 861.3V865.6M1255 859.9L1263.8 857.8M1258 861.3L1267 859" fill="none" stroke="#7c9cc4" stroke-width="0.5"/><path d="M1273.9 857.1h6.4l-3.2 3.6z" fill="#111"/><path d="M1289.3 855.1L1295.5 851.6L1304.6 853.2V863.2L1298.4 865.9L1289.3 864.5Z" fill="#c2c6e2" stroke="#8288ba" stroke-width="0.7" stroke-linejoin="round"/><path d="M1289.3 855.1L1298.4 856.7L1304.6 853.2M1298.4 856.7V865.9" fill="none" stroke="#8288ba" stroke-width="0.7"/><path d="M1295.5 851.6V861.6L1289.3 864.5M1295.5 861.6L1304.6 863.2" fill="none" stroke="#9aa0c8" stroke-width="0.5"/><path d="M1311.6 857.1h6.4l-3.2 3.6z" fill="#111"/><rect x="1330" y="850.9" width="9.6" height="3.4" fill="#5c5c5c"/><rect x="1326.8" y="855.4" width="16" height="7.2" rx="1.2" fill="#646464"/><rect x="1330" y="860" width="9.6" height="6.4" fill="#f4f4f4" stroke="#6a6a6a" stroke-width="0.7"/><path d="M1331.6 862.2h6.4M1331.6 864.2h6.4" stroke="#8a8a8a" stroke-width="0.7"/><rect x="1340" y="856.8" width="1.4" height="1.2" fill="#e8e8e8"/><path d="M1349.3 857.1h6.4l-3.2 3.6z" fill="#111"/><circle cx="1378.8" cy="856.6" r="4.1" fill="none" stroke="#636363" stroke-width="1.5"/><path d="M1381.8 859.8L1387.6 865" stroke="#636363" stroke-width="1.7"/><path d="M1381.8 851.6l6.2 6.4M1388 851.6l-6.2 6.4" stroke="#e8101c" stroke-width="2.1"/></g>
</svg>
<div id="bottom" class="abs"></div>
<div class="btn def" style="left:1144.5px">OK</div>
<div class="btn" style="left:1234.5px">Abbrechen</div>
<div class="btn dis" style="left:1325px">Anwenden</div>
<div class="abs" style="left:1407px;top:921px;width:2px;height:2px;background:#b0b0b0"></div>
</body></html>
